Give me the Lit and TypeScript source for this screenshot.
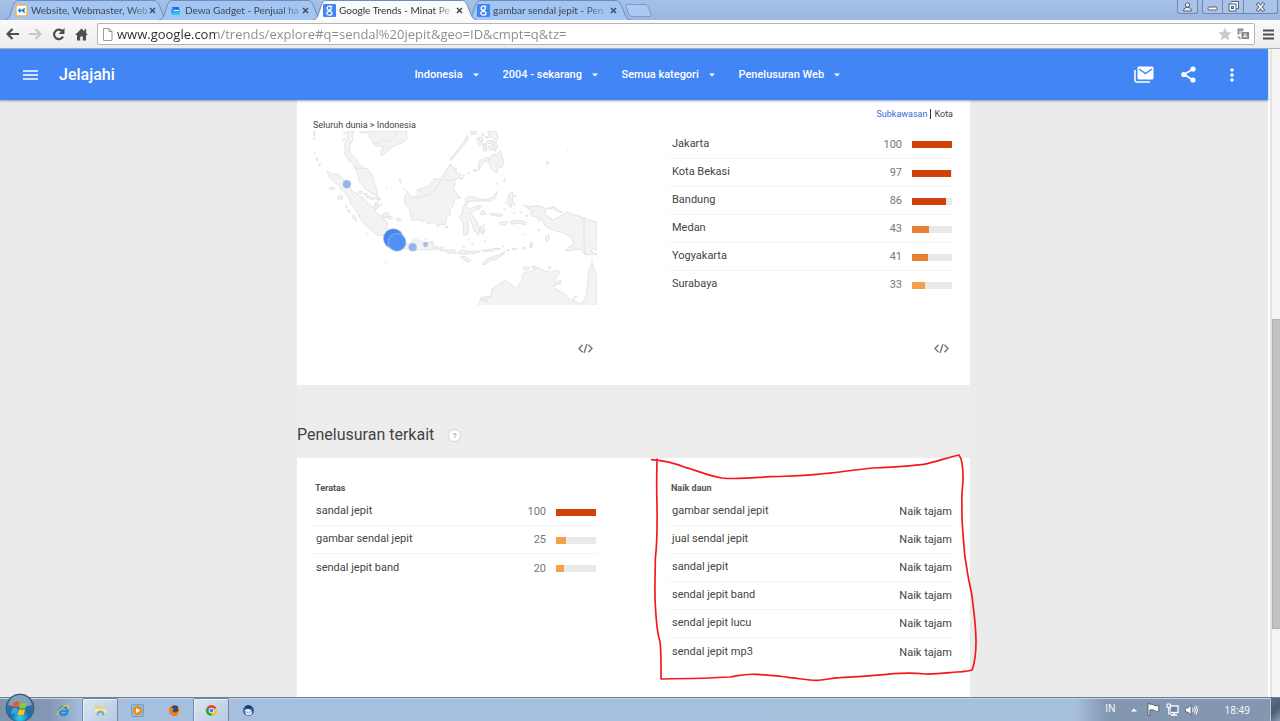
import { LitElement, html, css, svg, nothing } from "lit";
import { customElement, property } from "lit/decorators.js";
import { classMap } from "lit/directives/class-map.js";

interface Row {
  name: string;
  value: number;
}

const cities: Row[] = [
  { name: "Jakarta", value: 100 },
  { name: "Kota Bekasi", value: 97 },
  { name: "Bandung", value: 86 },
  { name: "Medan", value: 43 },
  { name: "Yogyakarta", value: 41 },
  { name: "Surabaya", value: 33 },
];

const topQueries: Row[] = [
  { name: "sandal jepit", value: 100 },
  { name: "gambar sendal jepit", value: 25 },
  { name: "sendal jepit band", value: 20 },
];

const risingQueries = [
  "gambar sendal jepit",
  "jual sendal jepit",
  "sandal jepit",
  "sendal jepit band",
  "sendal jepit lucu",
  "sendal jepit mp3",
];

/* ---------- tab strip ---------- */

const kIcon = svg`<rect x="1" y="1" width="11" height="11" rx="1" fill="#fff" stroke="#f5b04a" stroke-width="1.4"/><path d="M3 6.5h3M4.700 4.500v4M6 6.500h3.500M9.800 4.200 7.300 6.500 9.800 8.800" stroke="#1b86cf" stroke-width="1.500" fill="none"/>`;
const dewaIcon = svg`<path d="M3 3h7l1 4-1 4H4L2 8z" fill="#1fa4ff"/><path d="M3 3h7v2.500H5z" fill="#3a5cf0"/><path d="M4 8.500h6l-1 2.500H5z" fill="#24d5e8"/><path d="M5 6.500h5" stroke="#e5f6ff"/>`;
const googleIcon = svg`<rect width="13" height="13" rx="1" fill="#4285f4"/><circle cx="6.200" cy="4.200" r="2" fill="none" stroke="#fff" stroke-width="1.300"/><ellipse cx="6.400" cy="9.200" rx="2.600" ry="1.900" fill="none" stroke="#fff" stroke-width="1.300"/><path d="M7 2.300h2.500M6 6.200l1.500 1.300" stroke="#fff" stroke-width="1.100"/>`;

const tabs = [
  { title: "Website, Webmaster, Web", icon: kIcon, active: false },
  { title: "Dewa Gadget - Penjual ha", icon: dewaIcon, active: false },
  { title: "Google Trends - Minat Pe", icon: googleIcon, active: true },
  { title: "gambar sendal jepit - Pen", icon: googleIcon, active: false },
];

@customElement("browser-chrome")
class BrowserChrome extends LitElement {
  static styles = css`
    :host {
      display: block;
      font-family: "Open Sans", "Noto Sans", sans-serif;
      flex: none;
    }
    button {
      border: 0;
      padding: 0;
      background: none;
      font: inherit;
      color: inherit;
      display: flex;
      align-items: center;
      justify-content: center;
    }
    .strip {
      display: flex;
      height: 20px;
      padding: 0 2px 0 5px;
      background: linear-gradient(#a6c1e8, #9cb6df);
    }
    .tab {
      position: relative;
      display: flex;
      align-items: center;
      justify-content: space-between;
      width: 164px;
      margin-right: -10px;
      padding: 0 13px 0 10px;
      box-sizing: border-box;
      font: 10px Lato, "Open Sans", sans-serif;
      color: #3c4656;
    }
    .tab.active {
      z-index: 1;
      color: #333;
    }
    .shape {
      position: absolute;
      inset: 0;
      width: 100%;
      height: 20px;
    }
    .pick {
      position: relative;
      flex: none;
      gap: 3px;
    }
    .title {
      white-space: nowrap;
      line-height: 18px;
      mask-image: linear-gradient(90deg, #000 84%, rgba(0, 0, 0, 0.3));
    }
    .close {
      position: relative;
      flex: none;
      width: 9px;
      height: 12px;
    }
    .newtab {
      margin: 4px 0 0 3px;
      height: 13px;
    }
    .controls {
      display: flex;
      align-items: flex-start;
      margin-left: auto;
    }
    .win {
      height: 14px;
      width: 21px;
      box-sizing: border-box;
      border: 1px solid #7088b0;
      border-top: 0;
      border-left: 0;
      background: #abc3e6;
    }
    .win.user {
      border-left: 1px solid #7088b0;
      border-radius: 0 0 3px 3px;
      margin-right: 4px;
    }
    .win.first {
      border-left: 1px solid #7088b0;
      border-bottom-left-radius: 3px;
    }
    .win.last {
      width: 34px;
      border-bottom-right-radius: 3px;
    }
    .bar {
      display: flex;
      align-items: center;
      height: 29px;
      box-sizing: border-box;
      padding: 0 5px 0 1px;
      background: linear-gradient(#fafafa, #ececec);
      border-bottom: 1px solid #b0b0b0;
    }
    .nav {
      width: 23px;
      height: 22px;
    }
    .address {
      flex: 1;
      display: flex;
      align-items: center;
      gap: 2px;
      height: 22px;
      margin-left: 4px;
      padding: 0 3px 0 5px;
      box-sizing: border-box;
      border: 1px solid #b5b5b5;
      border-radius: 2px;
      background: #fff;
    }
    .url {
      flex: 1;
      min-width: 0;
      border: 0;
      padding: 0 0 0 2px;
      outline: 0;
      font: 13px "Open Sans", "Noto Sans", sans-serif;
      color: #333;
      background: linear-gradient(90deg, #2b2b2b 100px, #8a8a8a 100px);
      background-clip: text;
      -webkit-text-fill-color: transparent;
    }
    .menu {
      width: 14px;
      height: 20px;
      margin-left: 6px;
    }
    .mini {
      width: 16px;
      height: 18px;
    }
  `;

  render() {
    return html`
      <div class="strip">
        ${tabs.map(
          (t) => html`
            <div class=${classMap({ tab: true, active: t.active })}>
              <svg class="shape" viewBox="0 0 164 20" preserveAspectRatio="none" aria-hidden="true">
                <path
                  d="M0 20C5 19 5 15 8 6C10 1 11 .5 14 .5H148C152 .5 153 2 155 7C159 17 159 19 164 20"
                  fill=${t.active ? "#fafafa" : "#a2c5f1"}
                  stroke="#6f8db8"
                />
              </svg>
              <button class="pick">
                <svg width="13" height="13" viewBox="0 0 13 13">${t.icon}</svg>
                <span class="title">${t.title}</span>
              </button>
              <button class="close" aria-label="Tutup tab">
                <svg width="7" height="7" viewBox="0 0 7 7">
                  <path d="M1 1l5 5M6 1L1 6" stroke="#444b55" stroke-width="1.5" />
                </svg>
              </button>
            </div>
          `
        )}
        <button class="newtab" aria-label="Tab baru">
          <svg width="28" height="13" viewBox="0 0 28 13">
            <path d="M3 .5h18q2 0 3 2l3 8q.5 2-1 2H8q-2 0-3-2L2 2.500Q1.500.5 3 .5z" fill="#a9caf4" stroke="#7c9ac6" />
          </svg>
        </button>
        <div class="controls">
          <button class="win user" aria-label="Pengguna">
            <svg width="11" height="10" viewBox="0 0 11 10">
              <path d="M1.500 9Q1.500 6 4 5.500h3Q9.500 6 9.500 9z" fill="#e7eefa" stroke="#4f6080" />
              <circle cx="5.500" cy="3" r="2.200" fill="#e7eefa" stroke="#4f6080" />
            </svg>
          </button>
          <button class="win first" aria-label="Kecilkan">
            <svg width="11" height="10" viewBox="0 0 11 10">
              <rect x="1" y="5" width="9" height="3" rx="1" fill="#fff" stroke="#4f6080" />
            </svg>
          </button>
          <button class="win" aria-label="Pulihkan">
            <svg width="11" height="11" viewBox="0 0 11 11">
              <path d="M3.500.5h7v7h-2" fill="#fff" stroke="#4f6080" />
              <rect x="1" y="3" width="7" height="7" fill="#fff" stroke="#4f6080" />
              <rect x="3.500" y="5.500" width="2" height="2" fill="#abc3e6" stroke="#4f6080" />
            </svg>
          </button>
          <button class="win last" aria-label="Tutup">
            <svg width="11" height="10" viewBox="0 0 11 10">
              <path d="M2 1l7 8M9 1L2 9" stroke="#4f6080" stroke-width="3.400" />
              <path d="M2.500 1.500l6 7M8.500 1.500l-6 7" stroke="#fff" stroke-width="1.500" />
            </svg>
          </button>
        </div>
      </div>
      <div class="bar">
        <button class="nav" aria-label="Kembali">
          <svg width="13" height="12" viewBox="0 0 13 12">
            <path d="M6.500 1L1.500 6l5 5M2 6h11" fill="none" stroke="#4d4d4d" stroke-width="2.200" />
          </svg>
        </button>
        <button class="nav" aria-label="Maju">
          <svg width="13" height="12" viewBox="0 0 13 12">
            <path d="M6.500 1l5 5-5 5M11 6H0" fill="none" stroke="#c9c9c9" stroke-width="2.200" />
          </svg>
        </button>
        <button class="nav" aria-label="Muat ulang">
          <svg width="13" height="13" viewBox="0 0 13 13">
            <path d="M10.500 3.500A4.700 4.700 0 1 0 11 8.500" fill="none" stroke="#4d4d4d" stroke-width="2.200" />
            <path d="M12.500 0v6h-6z" fill="#4d4d4d" />
          </svg>
        </button>
        <button class="nav" aria-label="Beranda">
          <svg width="13" height="13" viewBox="0 0 13 13">
            <path d="M6.500.5L0 7h2v5.500h3.200V8.500h2.600v4H11V7h2l-1.800-1.800V1.200H9.400v2.200z" fill="#4d4d4d" />
          </svg>
        </button>
        <div class="address">
          <svg width="10" height="13" viewBox="0 0 10 13" aria-hidden="true">
            <path d="M.5.500h5.500l3 3v9H.5zM6 .5v3h3" fill="#fff" stroke="#999" />
          </svg>
          <input
            class="url"
            aria-label="Alamat"
            value="www.google.com/trends/explore#q=sendal%20jepit&geo=ID&cmpt=q&tz="
          />
          <button class="mini" aria-label="Tandai">
            <svg width="14" height="14" viewBox="0 0 14 14">
              <path d="M7 .5l1.900 4.600 4.900.3-3.800 3.200 1.200 4.900L7 10.800l-4.200 2.700L4 8.600.2 5.400l4.900-.3z" fill="#c9c9c9" />
            </svg>
          </button>
          <button class="mini" aria-label="Terjemahkan">
            <svg width="12" height="12" viewBox="0 0 12 12">
              <path d="M.5.500h6v2h-4v4h-2z" fill="#8b8b8b" />
              <path d="M3 3h3M3 5h1" stroke="#8b8b8b" />
              <rect x="4.500" y="4" width="7.500" height="7" fill="#858585" />
              <path d="M6.500 9.500l1.700-4 1.800 4M7 8.500h2.500" stroke="#fff" stroke-width=".9" fill="none" />
              <path d="M1 8.500l2.500 2.500" stroke="#8b8b8b" stroke-width="1.400" />
            </svg>
          </button>
        </div>
        <button class="menu" aria-label="Menu">
          <svg width="11" height="11" viewBox="0 0 11 11">
            <path d="M0 1.500h11M0 5.500h11M0 9.500h11" stroke="#4d4d4d" stroke-width="2.200" />
          </svg>
        </button>
      </div>
    `;
  }
}

/* ---------- blue bar of the Trends page ---------- */

@customElement("trends-header")
class TrendsHeader extends LitElement {
  static styles = css`
    :host {
      display: block;
      position: relative;
      z-index: 1;
      flex: none;
    }
    header {
      display: grid;
      grid-template-columns: 1fr auto 1fr;
      align-items: center;
      height: 51px;
      padding: 0 25px 0 19px;
      background: #4285f4;
      color: #fff;
      box-shadow: 0 1px 2px rgba(60, 90, 150, 0.55);
    }
    .left,
    .right {
      display: flex;
      align-items: center;
    }
    .left {
      gap: 18px;
    }
    .right {
      justify-content: flex-end;
      gap: 22px;
    }
    h1 {
      margin: 0;
      font-size: 16px;
      line-height: 20px;
      font-weight: 500;
    }
    button {
      border: 0;
      padding: 0;
      background: none;
      display: flex;
      align-items: center;
      justify-content: center;
      width: 22px;
      height: 24px;
    }
    .filters {
      display: flex;
      gap: 24px;
      padding-right: 8px;
    }
    .filter {
      display: flex;
      align-items: center;
      gap: 9px;
    }
    select {
      appearance: none;
      border: 0;
      padding: 0;
      background: none;
      color: #fff;
      font: 500 11px/16px Roboto, sans-serif;
    }
  `;

  render() {
    return html`
      <header>
        <div class="left">
          <button aria-label="Menu utama">
            <svg width="15" height="10" viewBox="0 0 15 10">
              <path d="M0 1h15M0 5h15M0 9h15" stroke="#fff" stroke-width="1.600" />
            </svg>
          </button>
          <h1>Jelajahi</h1>
        </div>
        <div class="filters">
          ${[
            ["Negara", "Indonesia"],
            ["Waktu", "2004 - sekarang"],
            ["Kategori", "Semua kategori"],
            ["Jenis", "Penelusuran Web"],
          ].map(
            ([label, value]) => html`
              <label class="filter">
                <select aria-label=${label}>
                  <option>${value}</option>
                </select>
                <svg width="6" height="4" viewBox="0 0 6 4"><path d="M0 .5h6l-3 3z" fill="#fff" /></svg>
              </label>
            `
          )}
        </div>
        <div class="right">
          <button aria-label="Berlangganan">
            <svg width="20" height="17" viewBox="0 0 20 17">
              <path d="M1 4v10q0 2 2 2h13" fill="none" stroke="#fff" stroke-width="1.600" />
              <rect x="3.500" y=".5" width="16" height="13" rx="1.500" fill="#fff" />
              <path d="M5 3l6.500 4.500L18 3" fill="none" stroke="#4285f4" stroke-width="1.500" />
            </svg>
          </button>
          <button aria-label="Bagikan">
            <svg width="15" height="17" viewBox="0 0 15 17">
              <path d="M12 3L3 8.500l9 5.500" fill="none" stroke="#fff" stroke-width="1.600" />
              <circle cx="12" cy="3" r="2.600" fill="#fff" />
              <circle cx="2.800" cy="8.500" r="2.600" fill="#fff" />
              <circle cx="12" cy="14" r="2.600" fill="#fff" />
            </svg>
          </button>
          <button aria-label="Lainnya">
            <svg width="4" height="14" viewBox="0 0 4 14">
              <circle cx="2" cy="2" r="1.800" fill="#fff" />
              <circle cx="2" cy="7" r="1.800" fill="#fff" />
              <circle cx="2" cy="12" r="1.800" fill="#fff" />
            </svg>
          </button>
        </div>
      </header>
    `;
  }
}

/* ---------- table with score bars or a text value ---------- */

@customElement("ranked-table")
class RankedTable extends LitElement {
  static styles = css`
    :host {
      display: block;
    }
    table {
      width: 100%;
      border-collapse: collapse;
    }
    caption {
      text-align: left;
      font-size: 9px;
      line-height: 18px;
      font-weight: 700;
      color: #555;
      padding: 0 0 0 2px;
    }
    tr + tr {
      border-top: 1px solid #f0f2f4;
    }
    th,
    td {
      height: 28px;
      box-sizing: border-box;
      padding: 2px 0 0;
      font-size: 11px;
      line-height: 16px;
      font-weight: 400;
      vertical-align: middle;
    }
    th {
      text-align: left;
      color: #444;
      padding: 0 0 0 3px;
    }
    .num {
      text-align: right;
      color: #777;
      width: 40px;
    }
    .cell {
      width: 51px;
      padding-right: 1px;
      padding-left: 10px;
    }
    .text {
      text-align: right;
      color: #444;
      padding-right: 1px;
    }
    .track {
      height: 7px;
      background: #e9e9e9;
    }
    .fill {
      height: 7px;
      background: #f2a14a;
    }
    .fill.high {
      background: #d04107;
    }
    .fill.mid {
      background: #e87f33;
    }
  `;

  @property() heading = "";
  @property({ attribute: false }) rows: Row[] = [];
  @property({ attribute: false }) texts: string[] = [];
  @property() textValue = "";

  render() {
    return html`
      <table>
        ${this.heading ? html`<caption>${this.heading}</caption>` : nothing}
        <tbody>
          ${this.rows.map(
            (r) => html`
              <tr>
                <th scope="row">${r.name}</th>
                <td class="num">${r.value}</td>
                <td class="cell">
                  <div class="track">
                    <div
                      class=${classMap({ fill: true, high: r.value > 80, mid: r.value > 40 && r.value <= 80 })}
                      style="width:${r.value}%"
                    ></div>
                  </div>
                </td>
              </tr>
            `
          )}
          ${this.texts.map(
            (t) => html`
              <tr>
                <th scope="row">${t}</th>
                <td class="text">${this.textValue}</td>
              </tr>
            `
          )}
        </tbody>
      </table>
    `;
  }
}

/* ---------- map of the archipelago ---------- */

const land = [
  // Sumatra
  "M91 215L99 218L106 224L120 222L128 226L136 236L146 242L152 258L162 266L168 276L180 280L184 288L196 292L206 302L210 310L220 314L226 324L232 320L238 322L236 332L242 344L254 348L256 358L268 364L273 372L270 384L271 398L264 410L252 406L244 408L228 394L216 386L204 374L192 358L182 342L174 328L162 314L156 296L146 280L132 268L126 256L110 246L98 234Z",
  // Malay peninsula
  "M150 93L172 93L166 106L168 122L158 136L158 154L166 166L176 176L184 190L200 204L214 208L228 228L232 250L240 270L243 290L230 284L214 274L196 258L186 240L182 220L174 206L168 190L156 184L150 172L142 164L146 148L142 134L152 118Z",
  // Indochina
  "M186 93L198 100L212 98L220 116L232 128L236 138L256 138L258 148L252 154L254 168L270 158L286 142L300 134L314 130L330 118L330 93Z",
  // Borneo
  "M326 284L334 280L346 292L360 292L364 280L362 270L380 264L398 258L410 244L412 236L428 240L440 226L450 208L462 192L470 204L480 206L478 216L496 224L486 234L472 240L476 252L470 266L480 280L492 296L474 298L472 316L460 330L462 342L450 352L446 376L434 374L422 380L416 368L392 372L384 362L372 366L366 360L346 362L342 342L338 326L328 316L322 300Z",
  // Sulawesi
  "M506 298L518 290L534 292L548 298L574 298L588 292L598 282L598 290L586 304L562 304L532 304L514 306L510 320L518 328L532 322L546 318L556 318L550 326L534 332L524 342L534 356L542 366L546 378L552 392L546 402L534 394L528 378L522 362L514 364L516 382L514 404L502 406L500 386L502 372L492 362L490 350L498 340L498 324L508 310Z",
  // Palawan, Mindanao
  "M460 178L472 164L486 146L500 130L512 106L516 110L508 130L490 150L476 166L464 182Z",
  "M546 192L550 182L566 174L576 172L578 182L590 162L602 166L612 152L616 168L622 186L616 204L606 200L602 218L590 212L584 206L578 190L568 184L556 194L552 204L546 202Z",
  "M574 93L598 93L606 110L600 124L590 114L578 108Z",
  "M540 116L552 112L558 126L552 138L544 128ZM560 134L568 130L572 152L562 154ZM574 140L590 134L594 146L580 152ZM586 122L600 128L606 144L596 140ZM520 96L532 94L534 102L524 106Z",
  // Java
  "M262 410L284 424L300 432L320 434L342 434L348 422L360 420L374 426L394 428L410 432L414 446L402 452L380 450L350 452L318 446L284 440L264 424Z",
  // Bali to Timor
  "M414 440L424 440L428 450L418 452ZM430 444L440 442L440 454L432 454ZM444 452L456 450L466 454L464 462L450 460ZM466 450L476 452L480 462L470 462ZM484 456L498 452L520 456L540 454L552 456L540 462L518 462L500 464L486 462Z",
  "M492 470L508 472L524 482L518 488L500 480ZM558 494L570 480L590 470L608 466L626 456L620 466L600 478L582 482L566 496ZM556 452L578 450L590 448L600 446L592 454L566 456Z",
  // Moluccas
  "M634 300L638 282L650 276L648 288L660 288L648 294L650 304L658 318L646 312L644 324L638 318ZM580 342L600 342L620 346L614 350L586 348ZM608 370L622 364L634 368L628 376L612 376ZM640 368L656 362L676 362L692 370L688 376L668 370L646 374ZM550 384L558 376L566 392L558 402L550 396Z",
  // New Guinea
  "M684 316L700 322L716 318L736 320L750 328L746 342L754 352L764 354L768 362L788 352L804 342L812 336L830 344L862 354L884 362L903 368L903 452L890 446L884 454L903 464L882 466L868 466L854 450L838 450L824 454L808 452L818 442L830 436L832 424L820 410L802 400L780 394L762 388L744 376L742 364L734 358L728 366L724 352L708 350L700 340L712 334L696 328Z",
  "M748 412L756 404L760 418L752 426L748 420ZM770 324L784 330L794 338L784 336Z",
  // Australia
  "M545 618L550 604L562 594L570 608L568 590L584 592L586 570L600 562L612 550L628 544L640 550L652 562L664 568L668 552L680 540L676 528L688 518L704 516L716 508L728 504L744 514L764 518L778 512L794 518L780 532L778 550L796 552L770 560L784 572L800 580L812 588L822 602L838 606L852 614L864 604L870 588L874 560L876 530L880 510L888 490L892 500L896 516L903 524L903 618Z",
  "M680 504L694 500L700 508L686 512ZM706 502L720 500L718 508Z",
];

const islets = [
  [52, 100, 2, 8], [52, 116, 1, 4], [52, 159, 1, 2], [60, 178, 2, 5], [68, 194, 2, 4], [106, 266, 8, 3], [130, 294, 7, 7],
  [148, 320, 3, 4], [156, 334, 4, 4], [170, 352, 5, 5], [178, 362, 3, 3], [210, 402, 2, 1], [268, 488, 2, 1],
  [192, 278, 6, 4], [206, 284, 5, 4], [214, 292, 5, 4], [226, 296, 6, 4], [242, 296, 8, 4], [240, 312, 6, 5],
  [238, 322, 8, 5], [252, 316, 3, 3], [246, 298, 5, 3], [268, 346, 10, 7], [280, 354, 8, 4], [305, 360, 7, 5], [262, 352, 6, 4],
  [270, 264, 2, 1], [310, 240, 2, 4], [312, 248, 2, 2], [322, 268, 2, 2], [332, 276, 2, 1],
  [450, 382, 3, 4], [406, 428, 5, 2], [386, 420, 2, 1], [502, 228, 3, 2], [516, 220, 3, 2], [536, 212, 7, 3], [548, 208, 3, 2],
  [494, 236, 6, 2], [602, 252, 1, 3], [600, 280, 1, 4], [624, 242, 2, 5], [598, 296, 2, 1], [560, 342, 10, 3], [546, 326, 4, 2],
  [560, 334, 3, 2], [624, 328, 2, 2], [628, 308, 2, 1], [654, 340, 3, 1], [674, 338, 2, 2], [692, 348, 3, 2], [754, 188, 3, 5],
  [815, 153, 1, 1], [760, 326, 7, 2], [772, 322, 6, 2], [796, 336, 4, 1], [704, 438, 4, 8], [706, 432, 3, 5],
  [684, 446, 5, 3], [654, 448, 7, 2], [636, 452, 5, 2], [620, 440, 3, 1], [680, 404, 2, 1], [728, 392, 3, 2],
  [528, 432, 4, 2], [516, 420, 3, 1], [888, 482, 2, 2], [606, 448, 7, 2], [566, 424, 2, 1], [582, 422, 1, 1],
  [502, 444, 3, 1], [560, 398, 4, 5], [546, 404, 3, 3], [564, 374, 2, 1], [760, 504, 6, 3], [790, 546, 5, 3],
  [838, 592, 3, 3], [832, 600, 3, 2], [558, 598, 6, 5], [536, 98, 4, 5], [560, 104, 4, 5], [572, 112, 5, 3],
  [554, 118, 6, 6], [566, 140, 4, 8], [580, 126, 8, 5], [596, 150, 4, 4], [142, 100, 2, 3], [142, 118, 3, 3],
];

@customElement("region-map")
class RegionMap extends LitElement {
  static styles = css`
    :host {
      display: block;
    }
    svg {
      display: block;
      width: 100%;
    }
    .land {
      fill: #f3f3f3;
      stroke: #d9d9d9;
      stroke-width: 2;
      stroke-linejoin: round;
    }
    .border {
      fill: none;
      stroke: #dadada;
      stroke-width: 2;
    }
    .pin {
      stroke: #b9c2cf;
      stroke-width: 2;
    }
  `;

  render() {
    return html`
      <svg viewBox="48 93 855 525" role="img" aria-label="Peta minat menurut kota">
        ${land.map((d) => svg`<path class="land" d=${d} />`)}
        ${islets.map(([x, y, rx, ry]) => svg`<ellipse class="land" cx=${x} cy=${y} rx=${rx} ry=${ry} />`)}
        <path
          class="border"
          d="M346 292L366 294L388 286L396 288L410 276L418 262L428 252L432 240L450 242L472 240M864 354L864 428L868 434L864 440L868 466M224 130L244 128L262 118L278 126L296 110L302 93M176 204L190 206L200 206M436 228L446 236"
        />
        <circle class="pin" cx="150" cy="253" r="12" fill="#8fb5f8" />
        <circle class="pin" cx="290" cy="417" r="30" fill="#4285f4" />
        <circle class="pin" cx="301" cy="428" r="27" fill="#5390f5" />
        <circle class="pin" cx="348" cy="443" r="12" fill="#8fb5f8" />
        <circle class="pin" cx="387" cy="435" r="7" fill="#9abcf8" />
      </svg>
    `;
  }
}

/* ---------- page content ---------- */

const embedIcon = html`<svg width="15" height="9" viewBox="0 0 15 9">
  <path d="M4.500.800L1 4.500l3.500 3.700M10.500.800L14 4.500l-3.500 3.700M9 0L6 9" fill="none" stroke="#777" stroke-width="1.400" />
</svg>`;

@customElement("trends-content")
class TrendsContent extends LitElement {
  static styles = css`
    :host {
      display: block;
      flex: 1;
      min-height: 0;
      overflow: hidden;
      padding-right: 1px;
    }
    main {
      max-width: 673px;
      margin: 0 auto;
      background: #ededed;
    }
    .card {
      display: grid;
      grid-template-columns: 284px 284px;
      justify-content: space-between;
      padding: 0 17px 0 16px;
      background: #fff;
    }
    .region {
      padding-bottom: 26px;
    }
    .crumbs {
      margin: 20px 0 0;
      font-size: 9px;
      line-height: 11px;
      color: #444;
    }
    .cities {
      padding-top: 8px;
    }
    .switch {
      display: flex;
      justify-content: flex-end;
      align-items: center;
      gap: 3px;
      margin-bottom: 10px;
      font-size: 9px;
      line-height: 12px;
      color: #444;
    }
    a {
      color: #3b6bd6;
      text-decoration: none;
    }
    .sep {
      width: 1px;
      height: 10px;
      background: #333;
    }
    .tools {
      display: flex;
      justify-content: flex-end;
      padding: 32px 4px 0 0;
    }
    .panel {
      display: flex;
      flex-direction: column;
      justify-content: space-between;
    }
    .embed {
      border: 0;
      padding: 0;
      background: none;
      display: flex;
      align-items: center;
      height: 22px;
    }
    .heading {
      display: flex;
      align-items: center;
      gap: 15px;
      height: 73px;
      box-sizing: border-box;
      padding-top: 26px;
    }
    h2 {
      margin: 0;
      font-size: 16px;
      line-height: 20px;
      font-weight: 400;
      color: #444;
    }
    .help {
      width: 11px;
      height: 11px;
      margin-top: 2px;
      border: 0;
      border-radius: 50%;
      padding: 0;
      background: #fff;
      box-shadow: 0 0 1px 1px #d4d4d4;
      font: 700 8px/11px Roboto, sans-serif;
      color: #aaa;
    }
    .related {
      padding-top: 21px;
      padding-bottom: 60px;
    }
    .rising {
      position: relative;
    }
    .scribble {
      position: absolute;
      left: -29px;
      top: -34px;
      width: 350px;
      height: 250px;
      pointer-events: none;
    }
  `;

  render() {
    return html`
      <main>
        <section class="card region">
          <div class="panel">
            <div>
              <p class="crumbs">Seluruh dunia &gt; Indonesia</p>
              <region-map></region-map>
            </div>
            <div class="tools"><button class="embed" aria-label="Sematkan peta">${embedIcon}</button></div>
          </div>
          <div class="panel cities">
            <div>
              <div class="switch"><a href="#subkawasan">Subkawasan</a><span class="sep"></span><span>Kota</span></div>
              <ranked-table .rows=${cities}></ranked-table>
            </div>
            <div class="tools"><button class="embed" aria-label="Sematkan daftar">${embedIcon}</button></div>
          </div>
        </section>
        <div class="heading">
          <h2>Penelusuran terkait</h2>
          <button class="help" aria-label="Bantuan">?</button>
        </div>
        <section class="card related">
          <ranked-table heading="Teratas" .rows=${topQueries}></ranked-table>
          <div class="rising">
            <ranked-table heading="Naik daun" .texts=${risingQueries} .textValue=${"Naik tajam"}></ranked-table>
            <svg class="scribble" viewBox="0 0 1050 750" aria-hidden="true">
              <path
                d="M35 44C75 47 105 55 135 67C175 77 205 93 245 99C290 104 340 98 390 95C440 93 490 93 530 88C590 84 640 74 700 69C760 67 800 64 850 58C890 50 920 38 957 30C968 44 970 70 969 110C967 130 964 150 966 180C964 220 968 250 970 280C972 320 976 350 982 380C986 410 993 430 997 460C1001 500 1008 540 1008 590C1008 630 1003 655 997 674C985 680 960 680 930 683C900 686 880 688 855 687C830 684 790 684 760 686C700 693 650 695 600 698C570 699 550 706 530 706C500 706 480 700 450 698C410 692 380 690 350 688C310 686 300 691 270 696C200 700 130 701 63 702C63 660 64 620 60 590C50 560 48 520 46 480C43 440 46 390 46 340C52 290 52 240 51 180C49 130 50 90 51 42"
                fill="none"
                stroke="#f3181c"
                stroke-width="5"
                stroke-linejoin="round"
                stroke-linecap="round"
              />
            </svg>
          </div>
        </section>
      </main>
    `;
  }
}

/* ---------- Windows taskbar ---------- */

const apps = [
  {
    name: "Internet Explorer",
    open: false,
    icon: svg`<circle cx="7" cy="7.500" r="4.300" fill="none" stroke="#1c8be0" stroke-width="2.600"/><path d="M3.500 7.500h8" stroke="#1c8be0" stroke-width="1.800"/><path d="M1 12C-1 9 7 1 12 1.500c2 .5 0 3-1 4" fill="none" stroke="#f1c232" stroke-width="1.300"/>`,
  },
  {
    name: "Windows Explorer",
    open: true,
    icon: svg`<path d="M1 2h5l1 1.500h6V11H1z" fill="#e9cf73"/><path d="M1 5h12v5H1z" fill="#f8eaa8"/><path d="M3 12.500V8.500q4-3 8 0v4H9V10H5v2.500z" fill="#6cb2dd"/>`,
  },
  {
    name: "Media Player",
    open: false,
    icon: svg`<rect x=".5" y=".5" width="13" height="13" rx="1" fill="#8dbbe2" stroke="#6d9cc8"/><circle cx="7" cy="7" r="5" fill="#f58a17"/><path d="M5.500 4.300v5.400L10 7z" fill="#fff"/>`,
  },
  {
    name: "Firefox",
    open: false,
    icon: svg`<circle cx="7" cy="7" r="5.800" fill="#e4611b"/><circle cx="7.500" cy="5.500" r="3.800" fill="#274b8f"/><path d="M1.500 4c2-1 3 1 5 1-1 1-2 2-1 3.500 2 1.500 4 .5 5-1 .5 3-2 5-4.500 5C3 12.500 1 9 1.500 4z" fill="#f08020"/><path d="M11 4c2 2 2 6-1 7.500" fill="none" stroke="#f5c63a" stroke-width="1.200"/>`,
  },
  {
    name: "Chrome",
    open: true,
    icon: svg`<circle cx="7" cy="7" r="6" fill="#f3c22c"/><path d="M7 7L1.800 4A6 6 0 0 1 12.200 4z" fill="#db4437"/><path d="M7 7L1.800 4A6 6 0 0 0 7 13z" fill="#2f9e54"/><circle cx="7" cy="7" r="3" fill="#fff"/><circle cx="7" cy="7" r="2.200" fill="#4285f4"/>`,
  },
  {
    name: "Thunderbird",
    open: false,
    icon: svg`<circle cx="7" cy="7" r="5.800" fill="#22569c"/><path d="M2.500 7q4-3 8 0v4q-3 2-6 .5z" fill="#e9edf2"/><path d="M2.500 7l4.500 3 3.500-3" stroke="#8a96a6" fill="none"/><path d="M3 3q4-3 8 1l-3 1z" fill="#173b70"/>`,
  },
];

@customElement("task-bar")
class TaskBar extends LitElement {
  static styles = css`
    :host {
      display: block;
      position: relative;
      z-index: 2;
      flex: none;
    }
    .bar {
      display: flex;
      align-items: stretch;
      height: 24px;
      box-sizing: border-box;
      border-top: 1px solid #6f7f93;
      box-shadow: inset 0 1px 0 #c3d5ea;
      background: linear-gradient(90deg, #8192ab, #8498b4 50px, #a6bfde 84px, #a6bfdd 84%, #8497b1 86.500%, #8497b1);
      font-family: "Open Sans", "Noto Sans", sans-serif;
      color: #fff;
    }
    button {
      border: 0;
      padding: 0;
      background: none;
      display: flex;
      align-items: center;
      justify-content: center;
      color: inherit;
      font: inherit;
    }
    .start {
      align-self: flex-end;
      width: 30px;
      height: 28px;
      margin: 0 10px 0 5px;
      align-items: flex-start;
    }
    .app {
      width: 36px;
      margin-right: 1px;
      box-sizing: border-box;
      border: 1px solid transparent;
      border-bottom: 0;
    }
    .app.open {
      border-color: #7388a5;
      border-radius: 2px 2px 0 0;
      background: linear-gradient(135deg, #dbe5f2, #b5cae4);
      box-shadow: inset 1px 1px 0 #e6eef8;
    }
    .tray {
      display: flex;
      align-items: center;
      margin-left: auto;
    }
    .lang {
      margin-right: 9px;
      font-size: 10px;
      line-height: 20px;
      align-self: flex-start;
    }
    .icon {
      width: 19px;
      height: 20px;
    }
    .clock {
      margin: 0 20px 0 24px;
      font-size: 10px;
      line-height: 20px;
    }
    .peek {
      width: 10px;
      align-self: stretch;
      background: linear-gradient(135deg, #5f6f84, #4e5c70 50%, #8a9bb3);
      border-left: 1px solid #b9c7d8;
    }
  `;

  render() {
    return html`
      <div class="bar">
        <button class="start" aria-label="Mulai">
          <svg width="30" height="28" viewBox="0 0 30 28">
            <defs>
              <radialGradient id="orb" cx="50%" cy="85%" r="75%">
                <stop offset="0" stop-color="#35d0f5" />
                <stop offset=".45" stop-color="#1a6fa8" />
                <stop offset="1" stop-color="#4a6f92" />
              </radialGradient>
            </defs>
            <circle cx="15" cy="15" r="14" fill="url(#orb)" stroke="#3d5878" />
            <path d="M3 12Q6 2 15 2t12 10Q15 16 3 12z" fill="#fff" opacity=".35" />
            <path d="M8.500 9.500Q11.500 7.500 14.500 9l-1.300 5.500q-3-1.500-6 .5z" fill="#ee5a24" />
            <path d="M15.500 9.500q3 1.500 6.500 0l-1.500 5.500q-3.500 1.500-6.300 0z" fill="#8cc63f" />
            <path d="M7 16q3-2 6-.5L11.700 21q-3-1.500-6 .5z" fill="#37a7ea" />
            <path d="M14 16q3 1.500 6.300 0l-1.500 5.500q-3 1.500-6.200 0z" fill="#fbc31b" />
          </svg>
        </button>
        ${apps.map(
          (a) => html`
            <button class=${classMap({ app: true, open: a.open })} aria-label=${a.name}>
              <svg width="13" height="13" viewBox="0 0 14 14">${a.icon}</svg>
            </button>
          `
        )}
        <div class="tray">
          <span class="lang">IN</span>
          <button class="icon" aria-label="Tampilkan ikon tersembunyi">
            <svg width="6" height="4" viewBox="0 0 6 4"><path d="M0 3.500h6L3 .5z" fill="#fff" /></svg>
          </button>
          <button class="icon" aria-label="Pusat tindakan">
            <svg width="13" height="13" viewBox="0 0 13 13">
              <path d="M1 .5h1.800v1q2-1 4 .5t5.500.5l-1 3 1 2.500q-3 1-5-.5T2.800 7v5.500H1z" fill="#fff" stroke="#42526a" stroke-width=".8" />
            </svg>
          </button>
          <button class="icon" aria-label="Jaringan">
            <svg width="13" height="13" viewBox="0 0 13 13">
              <rect x="4" y="3" width="8" height="6.500" fill="#6f85a3" stroke="#fff" stroke-width="1.300" />
              <path d="M5 12h6M8 9.500V12" stroke="#fff" stroke-width="1.300" />
              <path d="M1 1h3.500v3.500H1zM2.700 4.500V11H5" fill="#8fa0b8" stroke="#fff" />
            </svg>
          </button>
          <button class="icon" aria-label="Volume">
            <svg width="13" height="12" viewBox="0 0 13 12">
              <path d="M.5 4h2.500L6 .8v10.400L3 8H.5z" fill="#fff" stroke="#42526a" stroke-width=".7" />
              <path d="M7.500 4q1.500 2 0 4M9.300 2.800q2.400 3.200 0 6.400M11 1.500q3 4.500 0 9" fill="none" stroke="#fff" />
            </svg>
          </button>
          <span class="clock">18:49</span>
          <button class="peek" aria-label="Tampilkan desktop"></button>
        </div>
      </div>
    `;
  }
}

/* ---------- the whole screen ---------- */

@customElement("app-root")
class AppRoot extends LitElement {
  static styles = css`
    :host {
      display: flex;
      flex-direction: column;
      height: 100vh;
      overflow: hidden;
      font-family: Roboto, sans-serif;
      background: #ebebeb;
    }
    .viewport {
      flex: 1;
      min-height: 0;
      display: flex;
    }
    .page {
      flex: 1;
      min-width: 0;
      display: flex;
      flex-direction: column;
      background: #ebebeb;
    }
    .scrollbar {
      width: 8px;
      border-left: 2px solid #fff;
      padding-left: 2px;
      background: linear-gradient(90deg, #e4e4e4 2px, #f4f4f4 2px);
      display: grid;
      grid-template-rows: 270fr 310fr 68fr;
    }
    .thumb {
      grid-row: 2;
      background: #c2c2c2;
      border: 1px solid #b2b2b2;
      border-right: 0;
    }
  `;

  render() {
    return html`
      <browser-chrome></browser-chrome>
      <div class="viewport">
        <div class="page">
          <trends-header></trends-header>
          <trends-content></trends-content>
        </div>
        <div class="scrollbar"><div class="thumb"></div></div>
      </div>
      <task-bar></task-bar>
    `;
  }
}
